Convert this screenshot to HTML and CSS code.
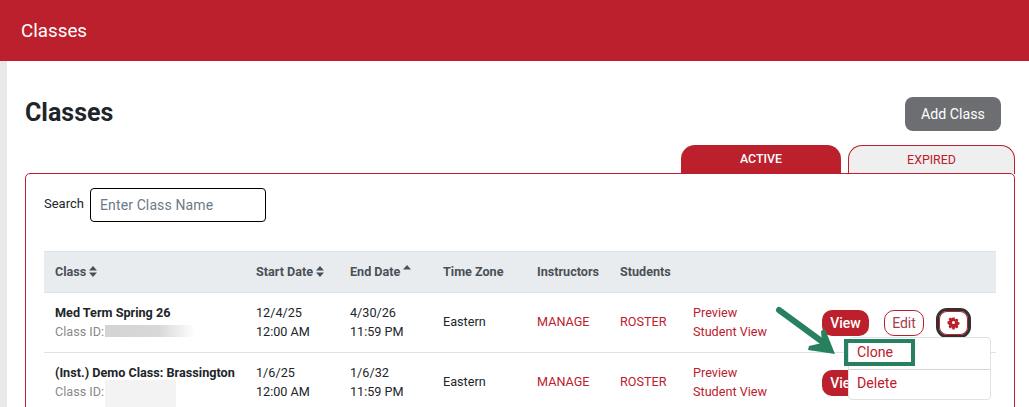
FILE: index.html
```html
<!DOCTYPE html>
<html lang="en">
<head>
<meta charset="utf-8">
<title>Classes</title>
<link rel="stylesheet" href="styles.css">
</head>
<body>
<header class="topbar">Classes</header>
<main class="main">
  <div class="title-row">
    <h1 class="title">Classes</h1>
    <button class="add-btn">Add Class</button>
  </div>
  <div class="tabs">
    <div class="tab tab-active">ACTIVE</div>
    <div class="tab tab-idle">EXPIRED</div>
  </div>
  <section class="panel">
    <div class="search">
      <label class="search-label">Search</label>
      <input class="search-input" placeholder="Enter Class Name">
    </div>
    <table class="grid">
      <colgroup>
        <col class="c1"><col class="c2"><col class="c3"><col class="c4"><col class="c5"><col class="c6"><col class="c7"><col>
      </colgroup>
      <thead>
        <tr>
          <th>Class <svg class="sort" viewBox="0 0 8 11"><path d="M4 0l4 4.4H0zM4 11L0 6.6h8z"/></svg></th>
          <th>Start Date <svg class="sort" viewBox="0 0 8 11"><path d="M4 0l4 4.4H0zM4 11L0 6.6h8z"/></svg></th>
          <th>End Date <svg class="sort sort-up" viewBox="0 0 8 11"><path d="M4 0l4 4.4H0z"/></svg></th>
          <th>Time Zone</th>
          <th>Instructors</th>
          <th>Students</th>
          <th></th>
          <th></th>
        </tr>
      </thead>
      <tbody>
        <tr>
          <td><strong class="cname">Med Term Spring 26</strong><span class="cid">Class ID:<i class="blur blur-a"></i></span></td>
          <td>12/4/25<br>12:00 AM</td>
          <td>4/30/26<br>11:59 PM</td>
          <td>Eastern</td>
          <td><a class="link">MANAGE</a></td>
          <td><a class="link">ROSTER</a></td>
          <td><a class="link">Preview</a><br><a class="link">Student View</a></td>
          <td>
            <div class="actions">
              <span class="btn-view">View</span>
              <span class="btn-edit">Edit</span>
              <span class="btn-gear"><svg class="gear" viewBox="0 0 24 24"><path fill-rule="evenodd" d="M9.500 1h5l.7 3.300 1.500.6 2.800-1.800 3.400 3.400-1.800 2.800.6 1.500 3.300.7v5l-3.300.7-.6 1.500 1.800 2.800-3.400 3.400-2.800-1.800-1.500.6-.7 3.300h-5l-.7-3.300-1.500-.6-2.800 1.800-3.400-3.400 1.800-2.800-.6-1.500L-1 14.500v-5l3.300-.7.6-1.500-1.800-2.800 3.400-3.400 2.800 1.800 1.500-.6zM12 8.700a3.300 3.300 0 1 0 0 6.600 3.300 3.300 0 0 0 0-6.600z"/></svg></span>
            </div>
          </td>
        </tr>
        <tr>
          <td><strong class="cname">(Inst.) Demo Class: Brassington</strong><span class="cid">Class ID:<i class="blur blur-b"></i></span></td>
          <td>1/6/25<br>12:00 AM</td>
          <td>1/6/32<br>11:59 PM</td>
          <td>Eastern</td>
          <td><a class="link">MANAGE</a></td>
          <td><a class="link">ROSTER</a></td>
          <td><a class="link">Preview</a><br><a class="link">Student View</a></td>
          <td>
            <div class="actions">
              <span class="btn-view">View</span>
            </div>
          </td>
        </tr>
      </tbody>
    </table>
  </section>
</main>
<div class="menu">
  <div class="menu-item">Clone</div>
  <div class="menu-item">Delete</div>
</div>
<div class="callout"></div>
<svg class="arrow" viewBox="0 0 70 60"><path d="M5 5L50 38" fill="none" stroke="#27815f" stroke-width="6" stroke-linecap="round"/><path d="M61 49L51 24 47 26 48 38 35 41 34 45z" fill="#27815f"/></svg>
</body>
</html>
```
FILE: styles.css
```css
* { box-sizing: border-box; }
html, body { height: 100%; }
body {
  margin: 0;
  overflow: hidden;
  background: #fff;
  font-family: Roboto, "Liberation Sans", sans-serif;
  color: #212529;
  position: relative;
}
.topbar {
  height: 61px;
  background: #bc202d;
  color: #fff;
  font-size: 18.800px;
  line-height: 62px;
  padding-left: 21px;
}
.main {
  height: 346px;
  border-left: 7px solid #e9e9e9;
  padding: 36px 14px 0 18px;
  overflow: hidden;
}
.title-row {
  display: flex;
  justify-content: space-between;
  align-items: flex-start;
  height: 48px;
  padding-right: 14px;
}
.title {
  margin: 0;
  font-size: 25px;
  font-weight: 700;
  line-height: 32px;
}
.add-btn {
  width: 96px;
  height: 34px;
  border: 0;
  border-radius: 8px;
  background: #6d6e71;
  color: #fff;
  font: 400 14.200px Roboto, sans-serif;
}
.tabs {
  display: flex;
  justify-content: flex-end;
  gap: 7px;
  height: 28px;
  position: relative;
  z-index: 1;
}
.tab {
  width: 160px;
  height: 29px;
  border-radius: 14px 14px 0 0;
  font-size: 12.400px;
  line-height: 28px;
  text-align: center;
}
.tab-active { background: #bc202d; color: #fff; font-weight: 500; }
.tab-idle {
  width: 167px;
  background: #efefef;
  color: #bc202d;
  border: 1px solid #bc202d;
  border-bottom: 0;
  line-height: 27px;
}
.panel {
  height: 300px;
  border: 1px solid #bc202d;
  border-radius: 5px 5px 0 0;
  padding: 14px 18px 0;
  position: relative;
  z-index: 2;
  background: #fff;
}
.search {
  display: flex;
  align-items: flex-start;
  height: 63px;
}
.search-label {
  font-size: 13px;
  line-height: 32px;
  width: 46px;
}
.search-input {
  width: 176px;
  height: 34px;
  border: 1px solid #000;
  border-radius: 4px;
  padding: 0 9px;
  font: 14px Roboto, sans-serif;
  letter-spacing: 0.12px;
  outline: 0;
}
.search-input::placeholder { color: #6c7a8a; opacity: 1; }
.grid {
  width: 952px;
  table-layout: fixed;
  border-collapse: collapse;
  font-size: 12.650px;
}
.c1 { width: 201px; }
.c2 { width: 94px; }
.c3 { width: 93px; }
.c4 { width: 94px; }
.c5 { width: 83px; }
.c6 { width: 73px; }
.c7 { width: 129px; }
.grid th {
  height: 41px;
  padding: 0 11px 2px;
  background: #e9ecef;
  border-top: 1px solid #dee2e6;
  border-bottom: 1px solid #dee2e6;
  text-align: left;
  color: #495057;
  font-size: 12.600px;
  font-weight: 700;
  white-space: nowrap;
}
.grid td {
  height: 60px;
  padding: 0 11px 2px;
  border-bottom: 1px solid #dee2e6;
  line-height: 19px;
  color: #212529;
  vertical-align: middle;
  white-space: nowrap;
}
.sort { width: 8px; height: 11px; fill: #495057; vertical-align: -1px; }
.sort-up { vertical-align: 0; }
.cname { display: block; font-weight: 700; }
.cid { display: block; color: #8a8a8a; position: relative; }
.blur { position: absolute; left: 50px; display: block; }
.blur-a {
  top: 3px;
  width: 90px;
  height: 12px;
  background: linear-gradient(90deg, #d4d4d4, #d8d8d8 60%, #fff);
}
.blur-b {
  top: -2px;
  width: 71px;
  height: 30px;
  background: #f3f3f3;
}
.link { color: #bc202d; }
.actions { display: flex; align-items: center; padding-top: 2px; }
.btn-view {
  width: 47px;
  height: 26px;
  border-radius: 10px;
  background: #bc202d;
  color: #fff;
  font-weight: 500;
  font-size: 14px;
  line-height: 26px;
  text-align: center;
}
.btn-edit {
  width: 40px;
  height: 26px;
  margin-left: 15px;
  border: 1px solid #bc202d;
  border-radius: 10px;
  color: #a5404a;
  font-size: 14px;
  line-height: 24px;
  text-align: center;
}
.btn-gear {
  width: 35px;
  height: 30px;
  margin-left: 12px;
  border: 3px solid #33302f;
  border-radius: 11px;
  box-shadow: inset 0 0 0 1px #bc202d;
  display: flex;
  align-items: center;
  justify-content: center;
}
.gear { width: 11px; height: 11px; fill: #bc202d; overflow: visible; }
.menu {
  position: absolute;
  left: 848px;
  top: 337px;
  width: 143px;
  height: 63px;
  background: #fff;
  border: 1px solid #dee2e6;
  border-radius: 4px;
  z-index: 3;
}
.menu-item {
  height: 31px;
  padding-left: 8px;
  color: #bc202d;
  font-size: 14.200px;
  line-height: 29px;
}
.menu-item + .menu-item { border-top: 1px solid #d5d5d5; line-height: 27px; }
.callout {
  position: absolute;
  left: 844px;
  top: 339px;
  width: 71px;
  height: 27px;
  border: 4px solid #27815f;
  z-index: 4;
}
.arrow {
  position: absolute;
  left: 774px;
  top: 305px;
  width: 70px;
  height: 60px;
  z-index: 4;
}
```
